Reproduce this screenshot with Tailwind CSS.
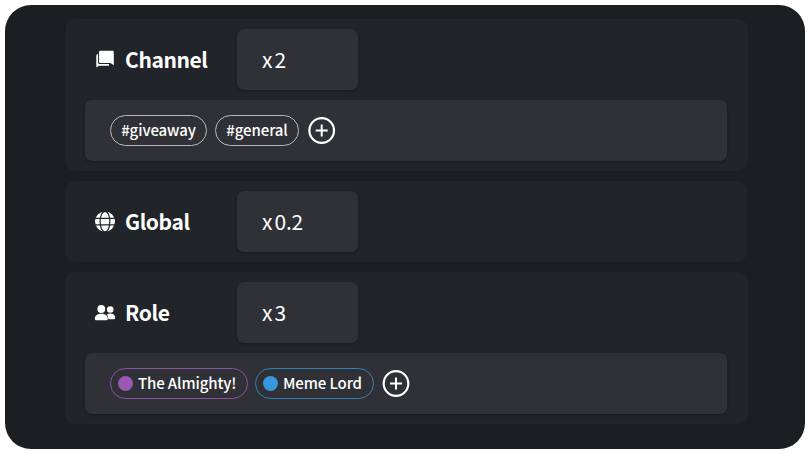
<!DOCTYPE html>
<html lang="en">
<head>
<meta charset="utf-8">
<title>Multipliers</title>
<script src="https://cdn.jsdelivr.net/npm/@tailwindcss/browser@4"></script>
</head>
<body class="bg-white p-[5px] font-['Noto_Sans_CJK_JP',sans-serif] text-white">
<main class="flex h-[444px] w-[800px] flex-col gap-2.5 rounded-[26px] bg-[#1b1f22] pt-3.5 pl-[60px]">

  <section class="h-[152px] w-[683px] rounded-[10px] bg-[#212429] px-5 pt-2.5">
    <div class="flex h-[61px] items-center">
      <div class="flex w-[152px] items-center pl-[9px]">
        <svg class="mr-[9px] size-[22px] shrink-0" viewBox="0 0 22 22" fill="#fff"><path d="M6.300 1.800H18.600a1.200 1.200 0 0 1 1.200 1.200V16.200l-3.400-2.200H6.300a1.200 1.200 0 0 1-1.200-1.200V3A1.200 1.200 0 0 1 6.300 1.800z"/><path d="M4.100 5v8.500A1.600 1.600 0 0 0 5.700 15.100H15v1.600H4.800L2.300 18.500V6.500q0-1.400 1.800-1.500z"/></svg>
        <h2 class="pb-[2px] text-[21px] leading-[30px] font-bold tracking-[-0.4px]">Channel</h2>
      </div>
      <div class="flex h-[61px] w-[121px] items-center rounded-[7px] bg-[#303136] pl-[25px] text-[21px] shadow-[0_1px_3px_rgba(0,0,0,0.3)]"><span class="mr-[2px]">x</span><span class="tracking-[-0.2px]">2</span></div>
    </div>
    <div class="mt-2.5 flex h-[61px] w-[642px] items-center rounded-[7px] bg-[#303136] pl-[25px] shadow-[0_1px_3px_rgba(0,0,0,0.3)]">
      <span class="mr-2 flex h-[31px] w-[97px] items-center justify-center rounded-full border border-[#b9b9bc] text-[15px] font-medium tracking-[-0.1px]">#giveaway</span>
      <span class="mr-[9px] flex h-[31px] w-[84px] items-center justify-center rounded-full border border-[#b9b9bc] text-[15px] font-medium tracking-[-0.1px]">#general</span>
      <svg class="size-[28px]" viewBox="0 0 28 28" fill="none" stroke="#fff" stroke-width="2"><circle cx="13.700" cy="13.500" r="12.300" stroke-width="2.200"/><path d="M13.700 7.500v12M7.700 13.500h12"/></svg>
    </div>
  </section>

  <section class="h-[81px] w-[682px] rounded-[10px] bg-[#212429] px-5 pt-2.5">
    <div class="flex h-[61px] items-center">
      <div class="flex w-[152px] items-center pl-[9px]">
        <svg class="mr-[9px] size-[22px] shrink-0" viewBox="0 0 22 22"><circle cx="11" cy="10.600" r="10" fill="#fff"/><g fill="none" stroke="#212429" stroke-width="1.200"><ellipse cx="11" cy="10.600" rx="4.900" ry="10.300"/><path d="M1 7.400h20M1 13.900h20"/></g></svg>
        <h2 class="pb-[2px] text-[21px] leading-[30px] font-bold tracking-[-0.4px]">Global</h2>
      </div>
      <div class="flex h-[61px] w-[121px] items-center rounded-[7px] bg-[#303136] pl-[25px] text-[21px] shadow-[0_1px_3px_rgba(0,0,0,0.3)]"><span class="mr-[2px]">x</span><span class="tracking-[-0.2px]">0.2</span></div>
    </div>
  </section>

  <section class="h-[152px] w-[683px] rounded-[10px] bg-[#212429] px-5 pt-2.5">
    <div class="flex h-[61px] items-center">
      <div class="flex w-[152px] items-center pl-[9px]">
        <svg class="mr-[9px] size-[22px] shrink-0" viewBox="0 0 22 22" fill="#fff"><circle cx="16.200" cy="7.500" r="3.300"/><path d="M14 17.300h6q1.200 0 1.200-1.200c0-3-1.700-4.600-5-4.600-1.200 0-2.200.3-3 .8z"/><circle cx="7.300" cy="7" r="4.600" fill="#212429"/><path d="M0 18.500c0-4.300 2.400-7.500 7.300-7.500s7.300 3.200 7.300 7.500z" fill="#212429"/><circle cx="7.300" cy="7" r="3.900"/><path d="M2.100 18.200q-1.300 0-1.300-1.300c0-3 2-5.200 6.500-5.200s6.500 2.200 6.500 5.200q0 1.300-1.300 1.300z"/></svg>
        <h2 class="pb-[2px] text-[21px] leading-[30px] font-bold tracking-[-0.4px]">Role</h2>
      </div>
      <div class="flex h-[61px] w-[121px] items-center rounded-[7px] bg-[#303136] pl-[25px] text-[21px] shadow-[0_1px_3px_rgba(0,0,0,0.3)]"><span class="mr-[2px]">x</span><span class="tracking-[-0.2px]">3</span></div>
    </div>
    <div class="mt-2.5 flex h-[61px] w-[642px] items-center rounded-[7px] bg-[#303136] pl-[25px] shadow-[0_1px_3px_rgba(0,0,0,0.3)]">
      <span class="mr-[7px] flex h-[31px] w-[138px] items-center rounded-full border border-[#8a51a2] pl-[7px] text-[15px] font-medium tracking-[-0.12px]"><i class="mr-[5px] size-[15px] rounded-full bg-[#9b59b6]"></i>The Almighty!</span>
      <span class="mr-2 flex h-[31px] w-[119px] items-center rounded-full border border-[#3181b8] pl-[7px] text-[15px] font-medium tracking-[-0.1px]"><i class="mr-[5px] size-[15px] rounded-full bg-[#3498db]"></i>Meme Lord</span>
      <svg class="size-[28px]" viewBox="0 0 28 28" fill="none" stroke="#fff" stroke-width="2"><circle cx="14" cy="13.500" r="12.300" stroke-width="2.200"/><path d="M14 7.500v12M8 13.500h12"/></svg>
    </div>
  </section>
</main>
</body>
</html>
